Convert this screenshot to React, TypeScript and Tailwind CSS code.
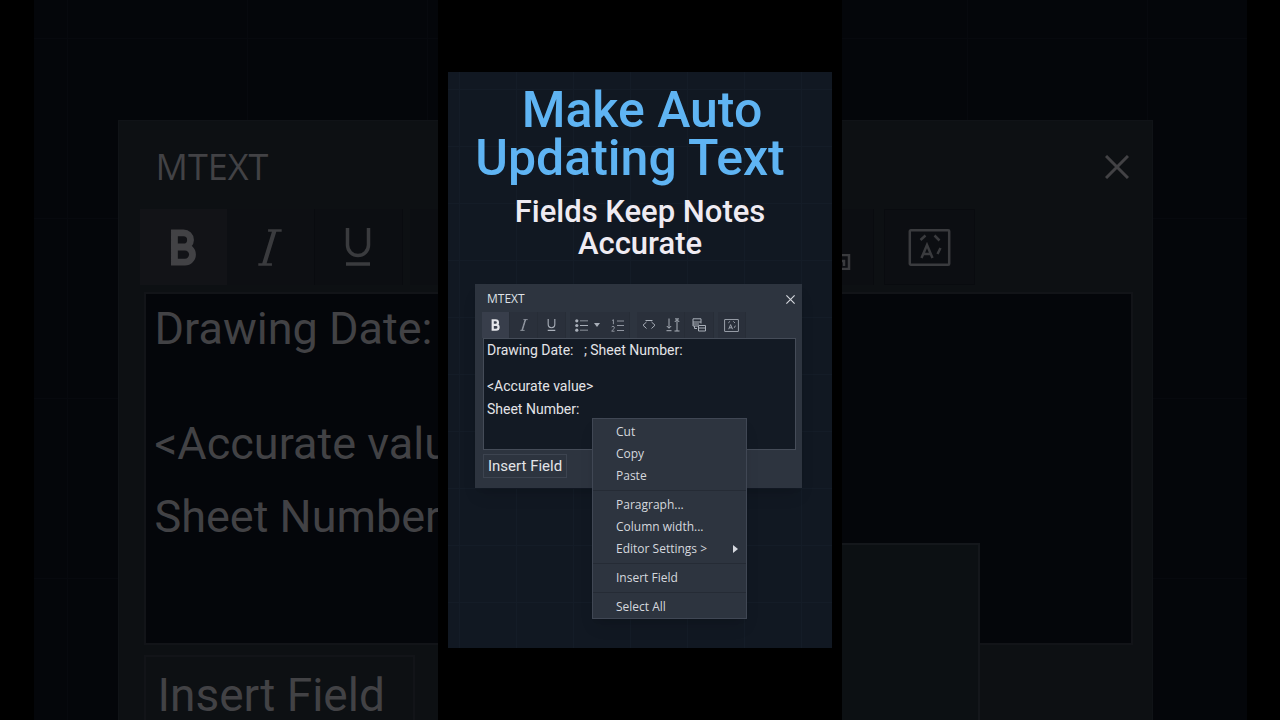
import React from "react";

interface ToolButtonProps {
  label: string;
  className?: string;
  active?: boolean;
  children: React.ReactNode;
}

function ToolButton({ label, className = "w-7", active, children }: Readonly<ToolButtonProps>) {
  return (
    <button
      type="button"
      aria-label={label}
      aria-pressed={active}
      className={`flex h-full items-center justify-center border-r border-[#272d37] text-[#a9afb9] ${className} ${
        active ? "bg-[#383e4b]" : "bg-[#2a303b]"
      }`}
    >
      {children}
    </button>
  );
}

function BoldIcon({ className }: { className: string }) {
  return (
    <svg viewBox="0 0 26 38" className={className} fill="none" stroke="currentColor" strokeWidth="7">
      <path d="M4 4h9.500a7 7 0 0 1 0 14.500H4M4 18.500h11a7.700 7.700 0 0 1 0 15.500H4M4.200 .5v37" />
    </svg>
  );
}

function ItalicIcon({ className }: { className: string }) {
  return (
    <svg viewBox="0 0 26 38" className={className} fill="none" stroke="currentColor" strokeWidth="2.400">
      <path d="M11 1.500h14M1 36.500h14M18.500 2L8 36M16.500 2L6 36" />
    </svg>
  );
}

function UnderlineIcon({ className }: { className: string }) {
  return (
    <svg viewBox="0 0 26 38" className={className} fill="none" stroke="currentColor" strokeWidth="3.500">
      <path d="M2.500 0v17a10.500 10.500 0 0 0 21 0V0M1 36h24" />
    </svg>
  );
}

function CloseIcon({ className }: { className: string }) {
  return (
    <svg viewBox="0 0 24 24" className={className} fill="none" stroke="currentColor" strokeWidth="3">
      <path d="M1 1l22 22M23 1L1 23" />
    </svg>
  );
}

function BulletsIcon() {
  return (
    <svg viewBox="0 0 13 13" className="size-[13px]" fill="currentColor">
      <circle cx="1.800" cy="1.800" r="1.600" />
      <circle cx="1.800" cy="6.500" r="1.600" />
      <circle cx="1.800" cy="11.200" r="1.600" />
      <path d="M5 1.500h8v.8H5zM5 6.100h8v.8H5zM5 10.800h8v.8H5z" />
    </svg>
  );
}

function NumbersIcon() {
  return (
    <svg viewBox="0 0 13 13" className="size-[13px]" fill="none" stroke="currentColor" strokeWidth=".8">
      <path d="M1.200 1.500l1.200-.8v4.500M.7 8.200c.2-1.200 2.700-1.200 2.600.3C3.300 9.800 1.500 11 .7 12.200h2.800" />
      <path d="M6 2h7M6 6.500h7M6 11.500h7" />
    </svg>
  );
}

function CodeIcon() {
  return (
    <svg viewBox="0 0 14 12" className="h-3 w-[14px]" fill="none" stroke="currentColor">
      <path d="M4.500 3L1 6.200l3.500 3.300M9.500 3L13 6.200 9.500 9.500M3.500 1.500h7" />
    </svg>
  );
}

function SpacingIcon() {
  return (
    <svg viewBox="0 0 14 14" className="size-[14px]" fill="none" stroke="currentColor">
      <path d="M3 .5v9.500M.8 8L3 10.300 5.200 8M.5 12.700h5M11 13V1.500M8.800 4L11 1.500 13.200 4M8.500 13h5M9 .9h4" />
    </svg>
  );
}

function TableIcon() {
  return (
    <svg viewBox="0 0 14 14" className="size-[14px]" fill="none" stroke="currentColor">
      <path d="M1 .8h8v3.200H1zM1 4v4h5M1 6h6M2.500 8v2.500h2.500M9 4v1.500M6.500 7.500h7v5.500h-7zM6.500 10h7" />
    </svg>
  );
}

function FieldIcon({ className }: { className: string }) {
  return (
    <svg viewBox="0 0 42 37" className={className} fill="none" stroke="currentColor" strokeWidth="2.500">
      <rect x="1.300" y="1.300" width="39.400" height="34.400" rx="1" />
      <path d="M13 29l5.500-13L24 29M15 25h7M12 11l5-4.500M26 6.500l5 5M32 19l-3 6" />
    </svg>
  );
}

const menuGroups = [
  ["Cut", "Copy", "Paste"],
  ["Paragraph...", "Column width...", "Editor Settings >"],
  ["Insert Field"],
  ["Select All"],
];

function ContextMenu() {
  return (
    <div
      role="menu"
      className="absolute top-[134px] left-[117px] w-[155px] border border-[#404754] bg-[#2d343f] pt-[2px] shadow-lg"
    >
      {menuGroups.map((group) => (
        <div
          key={group[0]}
          className="border-b border-[#252b35] pb-[3px] not-first:pt-[3px] last:border-b-0 last:pb-0"
        >
          {group.map((item) => (
            <button
              key={item}
              type="button"
              role="menuitem"
              className="flex h-[22px] w-full items-center justify-between pr-2 pl-[23px] text-left text-[12px] text-[#d5d8de]"
            >
              {item}
              {item.startsWith("Editor") && (
                <svg viewBox="0 0 5 8" className="h-2 w-[5px]" fill="currentColor">
                  <path d="M0 0l5 4-5 4z" />
                </svg>
              )}
            </button>
          ))}
        </div>
      ))}
    </div>
  );
}

function MTextWindow() {
  return (
    <section className="relative bg-[#2d343f] pr-[6px] pb-[10px] pl-2 shadow-lg">
      <header className="flex h-7 items-center justify-between pt-[2px] pr-px pl-1">
        <h3 className="text-[12px] text-[#dfe1e6]">MTEXT</h3>
        <button type="button" aria-label="Close" className="text-[#d5d8de]">
          <CloseIcon className="size-[9px]" />
        </button>
      </header>
      <div className="-ml-px flex h-[26px]">
        <ToolButton label="Bold" active>
          <BoldIcon className="h-3 w-[9px] text-[#e4e5e9]" />
        </ToolButton>
        <ToolButton label="Italic">
          <ItalicIcon className="h-3 w-2" />
        </ToolButton>
        <ToolButton label="Underline">
          <UnderlineIcon className="h-3 w-[9px]" />
        </ToolButton>
        <div className="ml-1 flex">
          <ToolButton label="Bullets" className="w-9 gap-[6px] border-transparent">
            <BulletsIcon />
            <svg viewBox="0 0 6 4" className="h-1 w-[6px]" fill="currentColor">
              <path d="M0 0h6L3 4z" />
            </svg>
          </ToolButton>
          <ToolButton label="Numbering" className="w-6">
            <NumbersIcon />
          </ToolButton>
        </div>
        <div className="ml-[7px] flex">
          <ToolButton label="Symbol" className="w-6 border-transparent">
            <CodeIcon />
          </ToolButton>
          <ToolButton label="Line spacing" className="w-6">
            <SpacingIcon />
          </ToolButton>
          <ToolButton label="Columns" className="w-[29px]">
            <TableIcon />
          </ToolButton>
        </div>
        <div className="ml-1 flex">
          <ToolButton label="Field">
            <FieldIcon className="h-[13px] w-[15px]" />
          </ToolButton>
        </div>
      </div>
      <div className="flex h-[112px] flex-col border border-[#454c58] bg-[#131a24] px-[3px] pt-[2px] font-[Roboto,sans-serif] text-[14px] text-[#e3e4e8]">
        <textarea
          aria-label="Note text"
          rows={3}
          className="block w-full resize-none overflow-hidden leading-[18px] outline-none"
          defaultValue={"Drawing Date:   ; Sheet Number:\n\n<Accurate value>"}
        />
        <input aria-label="Sheet number" className="h-7 w-full leading-7 outline-none" defaultValue="Sheet Number:" />
      </div>
      <button
        type="button"
        className="mt-1 block h-6 border border-[#3d4450] px-1 font-[Roboto,sans-serif] text-[15px] leading-5 text-[#e3e4e8]"
      >
        Insert Field
      </button>
      <ContextMenu />
    </section>
  );
}

// Enlarged, dimmed copy of the window that fills the space behind the poster
function Backdrop() {
  return (
    <div aria-hidden="true" className="absolute inset-0 flex justify-center overflow-hidden">
      <div className="h-full w-[1213px] shrink-0 bg-[#04060a] bg-[linear-gradient(to_right,#07090e_1px,transparent_1px),linear-gradient(to_bottom,#07090e_1px,transparent_1px)] bg-[size:180px_180px] bg-[position:33px_38px] px-[84px] pt-[120px]">
        <div className="relative h-[660px] w-[1035px] border border-[#101317] bg-[#0d1013] pr-[19px] pl-[25px] text-[#424245]">
          <div className="flex h-[88px] items-center justify-between pt-1 pr-1 pl-3">
            <span className="text-[36px]">MTEXT</span>
            <CloseIcon className="size-6" />
          </div>
          <div className="-ml-1 flex h-[76px] text-[#3a3b3e]">
            <span className="flex w-[87px] items-center justify-center bg-[#121317]">
              <BoldIcon className="h-[37px] w-[26px] text-[#424245]" />
            </span>
            <span className="flex w-[88px] items-center justify-center border-r border-[#090b0f] bg-[#0d0f13]">
              <ItalicIcon className="h-[37px] w-[26px]" />
            </span>
            <span className="flex w-[88px] items-center justify-center border-r border-[#090b0f] bg-[#0c0e12]">
              <UnderlineIcon className="h-[38px] w-[26px]" />
            </span>
            <span className="ml-[7px] flex w-[464px] items-end justify-end border-r border-[#090b0f] bg-[#0c0e12] pr-[22px] pb-[15px]">
              <svg viewBox="0 0 20 16" className="h-4 w-5" fill="none" stroke="currentColor" strokeWidth="2.500">
                <path d="M1 1h17v14H1M1 7h12v5" />
              </svg>
            </span>
            <span className="ml-[10px] flex w-[91px] items-center justify-center border border-[#090b0f] bg-[#0c0e12]">
              <FieldIcon className="h-[37px] w-[43px]" />
            </span>
          </div>
          <div className="mt-[7px] h-[353px] border-2 border-[#121418] bg-[#04060a] px-[9px] font-[Roboto,sans-serif] text-[45px]">
            <p className="h-[115px] leading-[70px]">Drawing Date:</p>
            <p className="h-[73px] leading-[70px]">&lt;Accurate value&gt;</p>
            <p className="leading-[70px]">Sheet Number:</p>
          </div>
          <div className="mt-[10px] h-20 w-[271px] border-2 border-[#121418] pl-3 font-[Roboto,sans-serif] text-[46px] leading-[76px]">
            Insert Field
          </div>
          <div className="absolute top-[422px] right-[172px] h-60 w-[490px] border-2 border-[#14171b] bg-[#0c1013]" />
        </div>
      </div>
    </div>
  );
}

export default function App() {
  return (
    <div className="relative flex min-h-screen justify-center overflow-hidden bg-black font-['Open_Sans',sans-serif]">
      <Backdrop />
      <main className="relative flex w-[404px] flex-col justify-center bg-black px-[10px]">
        <article className="bg-[#111822] bg-[linear-gradient(to_right,#141c27_1px,transparent_1px),linear-gradient(to_bottom,#141c27_1px,transparent_1px)] bg-[size:57px_57px] bg-[position:11px_17px] pt-[14px] pb-40">
          <h1 className="pl-1 text-center font-[Roboto,sans-serif] text-[50px] leading-[48px] font-medium text-[#5fb4f3]">
            Make Auto <span className="pr-6">Updating Text</span>
          </h1>
          <h2 className="mt-[14px] px-10 text-center font-[Roboto,sans-serif] text-[31px] leading-8 font-medium text-[#efebf2]">
            Fields Keep Notes Accurate
          </h2>
          <div className="mt-6 pr-[30px] pl-[27px]">
            <MTextWindow />
          </div>
        </article>
      </main>
    </div>
  );
}
